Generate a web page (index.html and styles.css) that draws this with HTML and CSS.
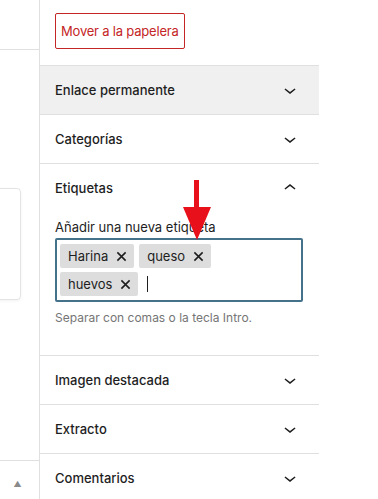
FILE: index.html
```html
<!DOCTYPE html>
<html lang="es">
<head>
  <meta charset="UTF-8">
  <meta name="viewport" content="width=device-width, initial-scale=1.0">
  <title>Etiquetas</title>
  <link rel="stylesheet" href="styles.css">
</head>
<body>
  <div class="editor-left">
    <div class="left-top"></div>
    <div class="left-card"></div>
    <div class="left-foot"><span class="left-arrow">&#9650;</span></div>
  </div>

  <div class="sidebar">
    <div class="prev-button"></div>
    <div class="trash-row">
      <button class="trash-button">Mover a la papelera</button>
    </div>

    <div class="panel panel-closed-gray">
      <div class="panel-head">
        <span>Enlace permanente</span>
        <svg class="chevron" viewBox="0 0 24 24"><path d="M17.5 11.6L12 16l-5.5-4.4.9-1.2L12 14l4.6-3.6 1 1.2z"/></svg>
      </div>
    </div>

    <div class="panel">
      <div class="panel-head">
        <span>Categorías</span>
        <svg class="chevron" viewBox="0 0 24 24"><path d="M17.5 11.6L12 16l-5.5-4.4.9-1.2L12 14l4.6-3.6 1 1.2z"/></svg>
      </div>
    </div>

    <div class="panel">
      <div class="panel-head">
        <span>Etiquetas</span>
        <svg class="chevron" viewBox="0 0 24 24"><path d="M6.5 12.4L12 8l5.5 4.4-.9 1.2L12 10l-4.6 3.6-1-1.2z"/></svg>
      </div>
      <div class="panel-body">
        <label class="tag-label">Añadir una nueva etiqueta</label>
        <div class="tag-input">
          <span class="token">Harina<span class="token-remove"><svg viewBox="0 0 12 12"><path d="M1.5 1.5l9 9M10.5 1.5l-9 9"/></svg></span></span>
          <span class="token">queso<span class="token-remove"><svg viewBox="0 0 12 12"><path d="M1.5 1.5l9 9M10.5 1.5l-9 9"/></svg></span></span>
          <span class="token">huevos<span class="token-remove"><svg viewBox="0 0 12 12"><path d="M1.5 1.5l9 9M10.5 1.5l-9 9"/></svg></span></span>
          <span class="caret"></span>
        </div>
        <p class="tag-help">Separar con comas o la tecla Intro.</p>
      </div>
    </div>

    <div class="panel">
      <div class="panel-head">
        <span>Imagen destacada</span>
        <svg class="chevron" viewBox="0 0 24 24"><path d="M17.5 11.6L12 16l-5.5-4.4.9-1.2L12 14l4.6-3.6 1 1.2z"/></svg>
      </div>
    </div>

    <div class="panel">
      <div class="panel-head">
        <span>Extracto</span>
        <svg class="chevron" viewBox="0 0 24 24"><path d="M17.5 11.6L12 16l-5.5-4.4.9-1.2L12 14l4.6-3.6 1 1.2z"/></svg>
      </div>
    </div>

    <div class="panel">
      <div class="panel-head">
        <span>Comentarios</span>
        <svg class="chevron" viewBox="0 0 24 24"><path d="M17.5 11.6L12 16l-5.5-4.4.9-1.2L12 14l4.6-3.6 1 1.2z"/></svg>
      </div>
    </div>
  </div>

  <!-- flecha roja de anotación -->
  <svg class="red-arrow" viewBox="0 0 30 64">
    <rect x="12" y="2" width="5" height="30" fill="#e8101a"/>
    <path d="M1 29 L29 29 L15 62 Z" fill="#e8101a"/>
  </svg>
</body>
</html>
```

FILE: styles.css
```css
/* Barra lateral del editor */
body {
  margin: 0;
  height: 499px;
  overflow: hidden;
  display: flex;
  font-family: Inter, "Noto Sans", sans-serif;
  font-size: 13px;
  color: #1e1e1e;
  background-color: #fff;
  position: relative;
}
.editor-left {
  width: 39px;
  border-right: 1px solid #e0e0e0;
  display: flex;
  flex-direction: column;
}
.left-top {
  height: 49px;
  border-bottom: 1px solid #e0e0e0;
}
.left-card {
  margin-top: 138px;
  margin-left: -6px;
  width: 25px;
  height: 110px;
  border: 1px solid #e4e4e4;
  border-radius: 4px;
  box-shadow: 0 1px 3px rgba(0, 0, 0, 0.06);
}
.left-foot {
  margin-top: auto;
  height: 38px;
  border-top: 1px solid #e0e0e0;
  display: flex;
  justify-content: center;
  align-items: center;
}
.left-arrow {
  font-size: 8px;
  color: #8a8a8a;
  margin-top: 8px;
  margin-left: -4px;
}
.sidebar {
  width: 279px;
  display: flex;
  flex-direction: column;
}
.prev-button {
  margin-left: 15px;
  width: 96px;
  height: 1px;
  background-color: #555;
}
.trash-row {
  padding: 13px 15px 16px;
}
.trash-button {
  height: 36px;
  padding: 0 5px;
  font-family: inherit;
  font-size: 13px;
  letter-spacing: -0.2px;
  color: #c42525;
  background-color: #fff;
  border: 1px solid #c42525;
  border-radius: 2px;
}
.panel {
  border-top: 1px solid #e0e0e0;
}
.panel-closed-gray {
  background-color: #f0f0f0;
}
.panel-head {
  height: 48px;
  padding: 0 17px 0 15px;
  display: flex;
  justify-content: space-between;
  align-items: center;
  font-weight: 500;
}
.chevron {
  width: 24px;
  height: 24px;
  fill: #1e1e1e;
}
.panel-body {
  padding: 0 16px 16px 15px;
}
.tag-label {
  display: block;
  margin: 7px 0 3px;
  line-height: 16px;
}
.tag-input {
  height: 64px;
  box-sizing: border-box;
  border: 2px solid #44728a;
  border-radius: 2px;
  padding: 4px 24px 4px 3px;
  display: flex;
  flex-wrap: wrap;
  align-content: flex-start;
  align-items: center;
  gap: 4px 5px;
}
.token {
  height: 24px;
  display: flex;
  align-items: center;
  padding-left: 8px;
  background-color: #ddd;
  border-radius: 2px;
  line-height: 24px;
}
.token-remove {
  width: 26px;
  display: flex;
  justify-content: center;
  align-items: center;
}
.token-remove svg {
  width: 11px;
  height: 11px;
  stroke: #1e1e1e;
  stroke-width: 1.7;
  fill: none;
}
.caret {
  width: 1px;
  height: 16px;
  margin-left: 4px;
  background-color: #1e1e1e;
}
.tag-help {
  margin: 8px 0 13px;
  font-size: 12px;
  line-height: 16px;
  color: #757575;
}
.red-arrow {
  position: absolute;
  left: 182px;
  top: 178px;
  width: 30px;
  height: 64px;
}
```
